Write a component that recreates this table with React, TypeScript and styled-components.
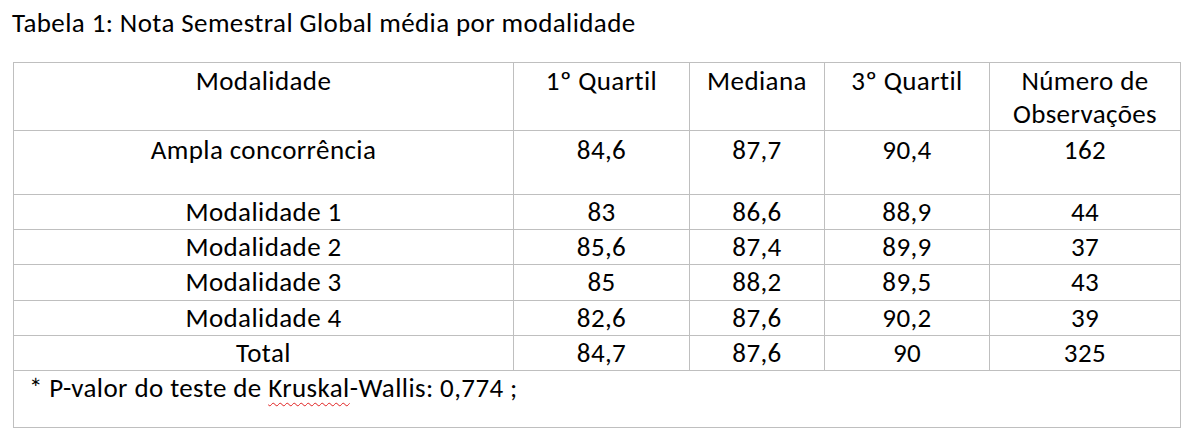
import React from "react";
import styled, { createGlobalStyle } from "styled-components";

const Global = createGlobalStyle`
  html, body { margin: 0; padding: 0; background: #ffffff; }
  body { font-family: Carlito, Lato, "Open Sans", sans-serif; color: #000; }
`;

const Page = styled.div`
  padding: 6px 0 0 12px;
  width: 1197px;
  height: 439px;
  box-sizing: border-box;
`;

const Title = styled.h1`
  margin: 0 0 22px 0;
  font-weight: 400;
  font-size: 27px;
  letter-spacing: 0.4px;
  line-height: 34px;
`;

const Table = styled.table`
  border-collapse: collapse;
  table-layout: fixed;
  width: 1168px;
  margin-left: 1px;
  font-size: 27px;
  letter-spacing: 0.4px;
`;

const Cell = styled.td<{ $h: number; $pt: number; $lh?: number; $align?: string }>`
  border: 1px solid #bfbfbf;
  height: ${(p) => p.$h}px;
  padding: ${(p) => p.$pt}px 0 0 0;
  box-sizing: border-box;
  vertical-align: top;
  text-align: ${(p) => p.$align || "center"};
  line-height: ${(p) => p.$lh || 30}px;
  white-space: nowrap;
`;

const FootCell = styled(Cell)`
  padding-left: 15px;
`;

const Spell = styled.span`
  text-decoration-line: underline;
  text-decoration-style: wavy;
  text-decoration-color: #e02020;
  text-decoration-thickness: 1px;
  text-underline-offset: 5px;
`;

const header = ["Modalidade", "1º Quartil", "Mediana", "3º Quartil"];
const widths = [500, 176, 135, 165, 191];

const rows: { cells: string[]; h: number; pt: number }[] = [
  { cells: ["Ampla concorrência", "84,6", "87,7", "90,4", "162"], h: 64, pt: 4 },
  { cells: ["Modalidade 1", "83", "86,6", "88,9", "44"], h: 35, pt: 2 },
  { cells: ["Modalidade 2", "85,6", "87,4", "89,9", "37"], h: 35, pt: 2 },
  { cells: ["Modalidade 3", "85", "88,2", "89,5", "43"], h: 36, pt: 2 },
  { cells: ["Modalidade 4", "82,6", "87,6", "90,2", "39"], h: 35, pt: 2 },
  { cells: ["Total", "84,7", "87,6", "90", "325"], h: 35, pt: 2 },
];

export default function App() {
  return (
    <>
      <Global />
      <Page>
        <Title>Tabela 1: Nota Semestral Global média por modalidade</Title>
        <Table>
          <colgroup>
            {widths.map((w, i) => (
              <col key={i} style={{ width: w }} />
            ))}
          </colgroup>
          <tbody>
            <tr>
              {header.map((h) => (
                <Cell key={h} $h={68} $pt={1} $lh={33}>
                  {h}
                </Cell>
              ))}
              <Cell $h={68} $pt={1} $lh={33}>
                Número de
                <br />
                Observações
              </Cell>
            </tr>
            {rows.map((r, i) => (
              <tr key={i}>
                {r.cells.map((c, j) => (
                  <Cell key={j} $h={r.h} $pt={r.pt}>
                    {c}
                  </Cell>
                ))}
              </tr>
            ))}
            <tr>
              <FootCell colSpan={5} $h={57} $pt={2} $align="left">
                * P-valor do teste de <Spell>Kruskal</Spell>-Wallis: 0,774 ;
              </FootCell>
            </tr>
          </tbody>
        </Table>
      </Page>
    </>
  );
}
